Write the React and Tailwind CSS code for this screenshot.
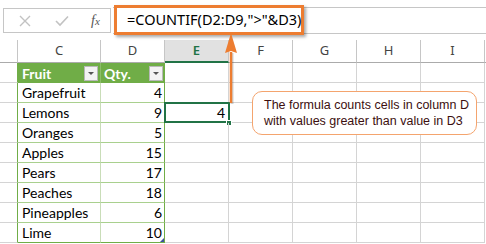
import React from "react";

const cols = [
  { k: "B", w: "w-[18px]" },
  { k: "C", w: "w-[83px]" },
  { k: "D", w: "w-[64px]" },
  { k: "E", w: "w-[64px]" },
  { k: "F", w: "w-[64px]" },
  { k: "G", w: "w-[64px]" },
  { k: "H", w: "w-[64px]" },
  { k: "I", w: "w-[64px]" },
];

const data = [
  ["Grapefruit", 4],
  ["Lemons", 9],
  ["Oranges", 5],
  ["Apples", 15],
  ["Pears", 17],
  ["Peaches", 18],
  ["Pineapples", 6],
  ["Lime", 10],
];

const cellFont = { fontFamily: "Lato, 'Liberation Sans', sans-serif" };

function Dropdown() {
  return (
    <div className="w-[14px] h-[15px] bg-[#f3f3f3] border border-[#b8b8b8] flex items-center justify-center">
      <div className="w-0 h-0 border-l-[3px] border-r-[3px] border-t-[3px] border-l-transparent border-r-transparent border-t-[#555]" />
    </div>
  );
}

function GridCell({ w, children, className = "" }) {
  return (
    <div
      className={`${w} h-full shrink-0 border-r border-b border-[#d4d4d4] ${className}`}
    >
      {children}
    </div>
  );
}

export default function App() {
  return (
    <div className="relative w-[486px] h-[244px] bg-white overflow-hidden">
      {/* formula bar */}
      <div className="flex h-[40px] pt-[7px]">
        <div className="ml-[3px] mt-[1px] w-[108px] h-[25px] border border-[#c6c6c6] flex items-center">
          <svg width="12" height="12" viewBox="0 0 12 12" className="ml-[15px]">
            <path d="M1 1 L11 11 M11 1 L1 11" stroke="#c2c2c2" strokeWidth="1.4" fill="none" />
          </svg>
          <svg width="14" height="12" viewBox="0 0 14 12" className="ml-[24px]">
            <path d="M1 6 L5 10 L13 1.5" stroke="#c2c2c2" strokeWidth="1.6" fill="none" />
          </svg>
          <span
            className="ml-[22px] text-[14px] italic text-[#555] leading-none"
            style={{ fontFamily: "'Liberation Serif', serif" }}
          >
            f<span className="text-[11px]">x</span>
          </span>
        </div>
        <div className="ml-[2px] flex-1 h-[27px] border-y border-[#c6c6c6]" />
      </div>

      {/* column headers */}
      <div className="flex h-[23px]">
        {cols.map((c) => (
          <div
            key={c.k}
            className={`${c.w} shrink-0 h-full flex items-center justify-center text-[13px] ${
              c.k === "E"
                ? "bg-[#e1e1e1] border-r border-[#c6c6c6] border-b-2 border-b-[#217346] text-[#217346] font-semibold"
                : "border-r border-b border-[#c6c6c6] border-b-[#ababab] text-[#444]"
            }`}
            style={{ fontFamily: "'Noto Sans', 'Open Sans', sans-serif" }}
          >
            {c.k === "B" ? "" : c.k}
          </div>
        ))}
        <div className="flex-1 border-b border-[#ababab]" />
      </div>

      {/* table header row */}
      <div className="flex h-[20px]" style={cellFont}>
        <GridCell w="w-[18px]" className="border-r-[#70ad47]" />
        <div className="w-[83px] shrink-0 h-full bg-[#70ad47] border-r border-[#8cbd6a] flex items-center justify-between pl-[4px] pr-[2px]">
          <span className="text-white font-bold text-[14px]">Fruit</span>
          <Dropdown />
        </div>
        <div className="w-[64px] shrink-0 h-full bg-[#70ad47] border-r border-[#70ad47] flex items-center justify-between pl-[3px] pr-[1px]">
          <span className="text-white font-bold text-[14px]">Qty.</span>
          <Dropdown />
        </div>
        <GridCell w="w-[64px]" />
        <GridCell w="w-[64px]" />
        <GridCell w="w-[64px]" />
        <GridCell w="w-[64px]" />
        <GridCell w="w-[64px]" />
      </div>

      {/* data rows */}
      {data.map(([name, qty], i) => {
        const lastRow = i === data.length - 1;
        const tb = lastRow ? "border-b-[#70ad47]" : "border-b-[#a9d08e]";
        return (
          <div key={name} className="flex h-[20px]" style={cellFont}>
            <GridCell w="w-[18px]" className="border-r-[#70ad47]" />
            <div
              className={`w-[83px] shrink-0 h-full border-r border-b border-r-[#c9ddb8] ${tb} flex items-center pl-[4px] text-[14px] text-black`}
            >
              {name}
            </div>
            <div
              className={`relative w-[64px] shrink-0 h-full border-r border-b border-r-[#70ad47] ${tb} flex items-center justify-end pr-[2px] text-[14px] text-black`}
            >
              {qty}
              {lastRow && (
                <div className="absolute right-0 bottom-0 w-0 h-0 border-l-[4px] border-t-[4px] border-l-transparent border-t-transparent border-r-[4px] border-r-[#3b4f9c]" />
              )}
            </div>
            <GridCell w="w-[64px]" className="relative">
              {i === 1 && (
                <>
                  <div className="absolute left-[-1px] top-[-1px] w-[66px] h-[21px] border-2 border-[#217346] flex items-center justify-end pr-[3px] text-[14px] text-black">
                    4
                  </div>
                  <div className="absolute right-[-4px] bottom-[-4px] w-[6px] h-[6px] bg-[#217346] border border-white" />
                </>
              )}
            </GridCell>
            <GridCell w="w-[64px]" />
            <GridCell w="w-[64px]" />
            <GridCell w="w-[64px]" />
            <GridCell w="w-[64px]" />
          </div>
        );
      })}

      {/* highlighted formula box */}
      <div className="absolute left-[114px] top-[5px] w-[190px] h-[30px] border-[3px] border-[#ed7d31] bg-white flex items-center pl-[10px] shadow-[2px_2px_3px_rgba(0,0,0,0.35)]">
        <span
          className="text-[14.5px] text-black whitespace-nowrap"
          style={{ fontFamily: "'Noto Sans', 'Open Sans', sans-serif" }}
        >
          =COUNTIF(D2:D9,"&gt;"&amp;D3)
        </span>
      </div>

      {/* arrow */}
      <svg
        className="absolute left-[222px] top-[31px]"
        width="18"
        height="76"
        viewBox="0 0 18 76"
      >
        <path d="M10 22 L10 73" stroke="rgba(0,0,0,0.18)" strokeWidth="3" />
        <path d="M9 21 L9 72" stroke="#ed7d31" strokeWidth="2.5" />
        <path d="M9 2 L15 22 L9 20 L3 22 Z" fill="#ed7d31" />
      </svg>

      {/* callout */}
      <div
        className="absolute left-[252px] top-[91px] w-[225px] h-[44px] rounded-[10px] border border-[#f4a46e] bg-white pl-[11px] pt-[5px] text-[12.5px] leading-[16px] text-[#3c0f0f] whitespace-nowrap"
        style={{ fontFamily: "'Liberation Sans', Arial, sans-serif" }}
      >
        <div>The formula counts cells in column D</div>
        <div>with values greater than value in D3</div>
      </div>
    </div>
  );
}
